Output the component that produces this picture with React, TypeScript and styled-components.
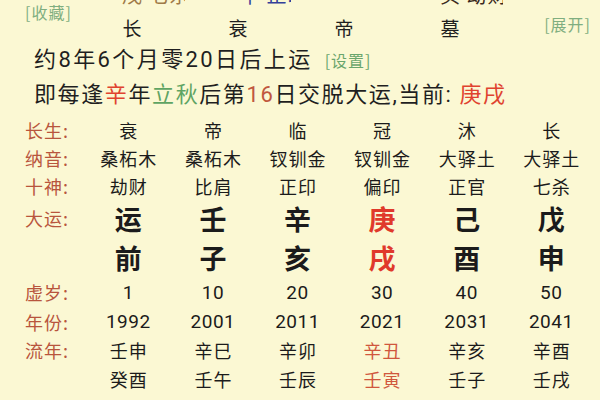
import React from "react";
import styled, { createGlobalStyle } from "styled-components";

const Global = createGlobalStyle`
  html, body { margin: 0; padding: 0; background: #fbf8d3; }
  body { font-family: "Roboto", "Noto Sans CJK SC", sans-serif; color: #222; }
`;

const Page = styled.div`
  width: 600px;
  height: 400px;
  overflow: hidden;
  background: #fbf8d3;
  display: flex;
  flex-direction: column;
`;

const TopGrid = styled.div`
  display: grid;
  grid-template-columns: 79px repeat(4, 106px) 1fr;
  grid-template-rows: 5px 35px;
`;

const CutCell = styled.div<{ $col: number }>`
  grid-row: 1;
  grid-column: ${(p) => p.$col};
  overflow: hidden;
  height: 5px;
`;

const CutText = styled.span<{ $color: string; $pl: number }>`
  display: block;
  margin-top: -15px;
  padding-left: ${(p) => p.$pl}px;
  font-size: 20px;
  line-height: 20px;
  letter-spacing: 1px;
  white-space: nowrap;
  color: ${(p) => p.$color};
  font-family: "Noto Sans CJK SC", sans-serif;
`;

const Tag = styled.span`
  font-family: "Noto Sans CJK SC", sans-serif;
  font-size: 16px;
  line-height: 18px;
  letter-spacing: 1px;
  color: #7fae80;
  white-space: nowrap;
`;

const CollectTag = styled(Tag)`
  grid-row: 1 / span 2;
  grid-column: 1;
  align-self: start;
  margin-top: 3px;
  padding-left: 25px;
`;

const ExpandTag = styled(Tag)`
  grid-row: 2;
  grid-column: 6;
  align-self: start;
  justify-self: end;
  margin-top: 10px;
  padding-right: 9px;
`;

const StageCell = styled.div<{ $col: number }>`
  grid-row: 2;
  grid-column: ${(p) => p.$col};
  text-align: center;
  font-family: "Noto Sans CJK SC", sans-serif;
  font-size: 19px;
  line-height: 20px;
  padding-top: 13px;
  color: #1f1f1f;
`;

const InfoLine = styled.div<{ $mt: number; $ls: number }>`
  margin-top: ${(p) => p.$mt}px;
  padding-left: 34px;
  font-size: 22px;
  line-height: 30px;
  letter-spacing: ${(p) => p.$ls}px;
  white-space: nowrap;
  color: #1f1f1f;
  display: flex;
  align-items: center;
`;

const Colored = styled.span<{ $c: string }>`
  color: ${(p) => p.$c};
`;

const SetTag = styled(Tag)`
  margin-left: 12px;
  color: #6aa66c;
`;

const Table = styled.div`
  margin-top: 6px;
  padding-left: 25px;
  display: flex;
  flex-direction: column;
`;

const Row = styled.div<{ $h: number }>`
  height: ${(p) => p.$h}px;
  display: grid;
  grid-template-columns: 61px repeat(6, 84.6px);
  align-items: center;
`;

const Label = styled.div`
  font-family: "Noto Sans CJK SC", sans-serif;
  font-size: 18px;
  letter-spacing: 1px;
  color: #b8553d;
  white-space: nowrap;
`;

const Cell = styled.div<{ $kind: "text" | "big" | "num"; $red?: boolean; $soft?: boolean }>`
  text-align: center;
  white-space: nowrap;
  font-family: ${(p) => (p.$kind === "num" ? '"Roboto", sans-serif' : '"Noto Sans CJK SC", sans-serif')};
  font-size: ${(p) => (p.$kind === "big" ? 27 : p.$kind === "num" ? 19 : 18)}px;
  font-weight: ${(p) => (p.$kind === "big" ? 700 : 400)};
  letter-spacing: ${(p) => (p.$kind === "text" ? "1px" : p.$kind === "num" ? "0.5px" : "0")};
  text-indent: ${(p) => (p.$kind === "text" ? "1px" : "0")};
  color: ${(p) => (p.$red ? (p.$soft ? "#d0573d" : "#e0392b") : "#1b1b1b")};
  line-height: 1;
`;

type RowDef = {
  label: string;
  h: number;
  kind: "text" | "big" | "num";
  values: string[];
  mark?: boolean;
  soft?: boolean;
};

const rows: RowDef[] = [
  { label: "长生:", h: 28, kind: "text", values: ["衰", "帝", "临", "冠", "沐", "长"] },
  { label: "纳音:", h: 28, kind: "text", values: ["桑柘木", "桑柘木", "钗钏金", "钗钏金", "大驿土", "大驿土"] },
  { label: "十神:", h: 27, kind: "text", values: ["劫财", "比肩", "正印", "偏印", "正官", "七杀"] },
  { label: "大运:", h: 38, kind: "big", mark: true, values: ["运", "壬", "辛", "庚", "己", "戊"] },
  { label: "", h: 40, kind: "big", mark: true, values: ["前", "子", "亥", "戌", "酉", "申"] },
  { label: "虚岁:", h: 30, kind: "num", values: ["1", "10", "20", "30", "40", "50"] },
  { label: "年份:", h: 29, kind: "num", values: ["1992", "2001", "2011", "2021", "2031", "2041"] },
  { label: "流年:", h: 28, kind: "text", mark: true, soft: true, values: ["壬申", "辛巳", "辛卯", "辛丑", "辛亥", "辛酉"] },
  { label: "", h: 29, kind: "text", mark: true, soft: true, values: ["癸酉", "壬午", "壬辰", "壬寅", "壬子", "壬戌"] },
];

const CURRENT = 3;

export default function App() {
  return (
    <Page>
      <Global />
      <TopGrid>
        <CutCell $col={2}>
          <CutText $color="#a07a48" $pl={43}>戊 七杀</CutText>
        </CutCell>
        <CutCell $col={3}>
          <CutText $color="#33409a" $pl={55}>辛 正印</CutText>
        </CutCell>
        <CutCell $col={5}>
          <CutText $color="#3a2a20" $pl={43}>癸 劫财</CutText>
        </CutCell>
        <CollectTag>[收藏]</CollectTag>
        <StageCell $col={2}>长</StageCell>
        <StageCell $col={3}>衰</StageCell>
        <StageCell $col={4}>帝</StageCell>
        <StageCell $col={5}>墓</StageCell>
        <ExpandTag>[展开]</ExpandTag>
      </TopGrid>
      <InfoLine $mt={5} $ls={2.4}>
        约8年6个月零20日后上运
        <SetTag>[设置]</SetTag>
      </InfoLine>
      <InfoLine $mt={5} $ls={1.6}>
        即每逢<Colored $c="#e0432f">辛</Colored>年<Colored $c="#5fa463">立秋</Colored>后第
        <Colored $c="#c0573e">16</Colored>日交脱大运,当前:&nbsp;<Colored $c="#e0432f">庚戌</Colored>
      </InfoLine>
      <Table>
        {rows.map((r, i) => (
          <Row key={i} $h={r.h}>
            <Label>{r.label}</Label>
            {r.values.map((v, j) => (
              <Cell key={j} $kind={r.kind} $red={!!r.mark && j === CURRENT} $soft={r.soft}>
                {v}
              </Cell>
            ))}
          </Row>
        ))}
      </Table>
    </Page>
  );
}
